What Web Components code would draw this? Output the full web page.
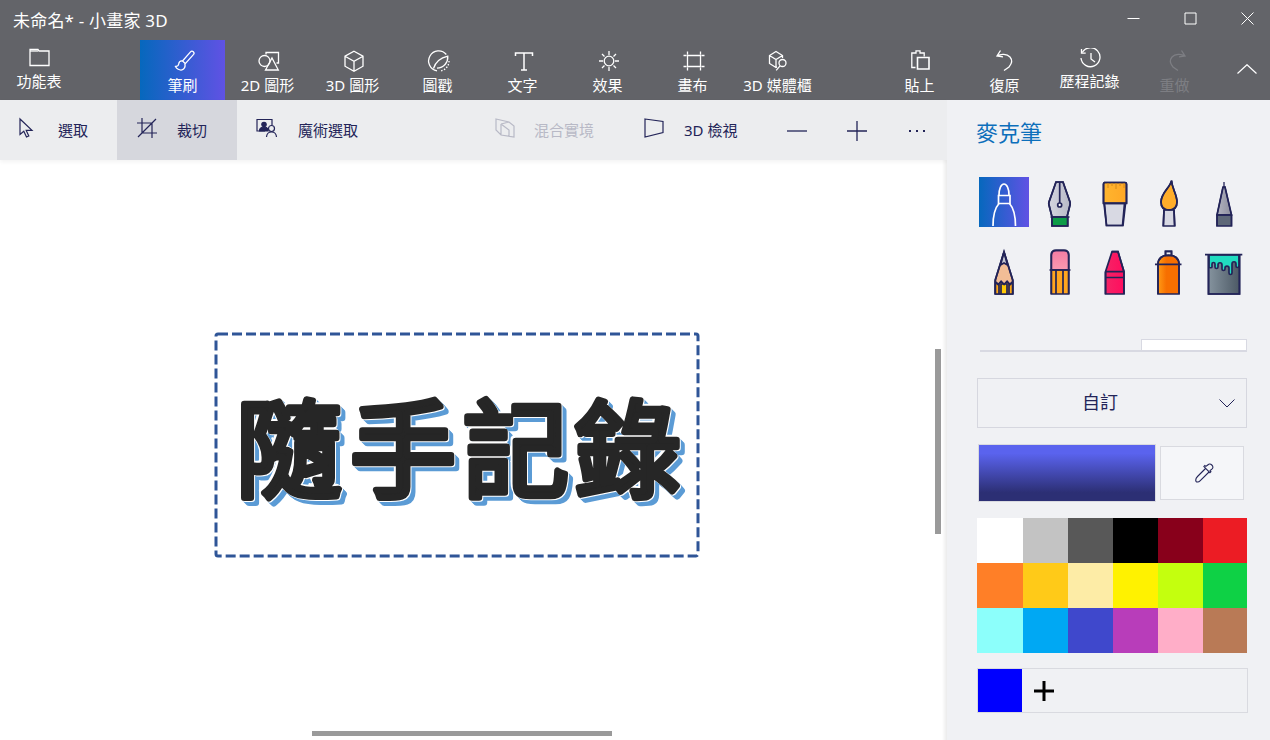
<!DOCTYPE html>
<html lang="zh-Hant"><head><meta charset="utf-8"><title>小畫家 3D</title>
<style>
html,body{margin:0;height:100%;overflow:hidden;background:#fff}
body{font-family:"Noto Sans","Noto Sans CJK TC",sans-serif;font-size:15px}
</style></head><body>
<paint-app>
  <paint-titlebar slot="title">未命名* - 小畫家 3D</paint-titlebar>
  <paint-ribbon slot="ribbon">
    <ribbon-button slot="menu" label="功能表" raised><svg viewBox="0 0 24 24"><path d="M3 1.500h8l1 1.500h10v14.500H3z"/><path d="M3 3h8"/></svg></ribbon-button>
    <ribbon-button active label="筆刷"><svg viewBox="0 0 24 24"><path d="M22.300 3.800c-.9-.9-2-.7-2.800.1L11.500 13l2.800 2.600 8.300-9.200c.6-.7.500-1.800-.3-2.600z"/><path d="M11.500 13c-2.300-.3-3.500 1-3.800 3-.2 1.500-1.400 2.400-3.200 2.500 1 2.300 4 4 6.500 3.400 2.600-.6 3.600-3.700 2.800-6.300"/></svg></ribbon-button>
    <ribbon-button label="2D 圖形"><svg viewBox="0 0 24 24"><circle cx="8.500" cy="13" r="5.500"/><path d="M10 6.500V4.500h12.500V15h-2"/><path d="M16 10l6.300 12H9.500z"/></svg></ribbon-button>
    <ribbon-button label="3D 圖形"><svg viewBox="0 0 24 24"><path d="M13 3.200l9 5v10l-9 5-9-5v-10zM4 8.200l9 5 9-5M13 13.200v10"/></svg></ribbon-button>
    <ribbon-button label="圖戳"><svg viewBox="0 0 24 24"><path d="M20.300 6.500A10 10 0 1 0 11 22.800"/><path d="M23 13a10 10 0 0 1-8 9.800" stroke-dasharray="1.500 1.500"/><path d="M7.500 20.500C9.500 14 14 10 21.800 8.200c.3 6.400-4 11.600-10.800 12"/></svg></ribbon-button>
    <ribbon-button label="文字"><svg viewBox="0 0 24 24"><path d="M4.500 8V5h17v3M13 5v17M10 22h6" stroke-width="1.500"/></svg></ribbon-button>
    <ribbon-button label="效果"><svg viewBox="0 0 24 24"><circle cx="13" cy="13" r="4.800"/><path d="M13 3v4M13 19v4M3 13h4M19 13h4M6 6l2.500 2.500M17.500 17.500L20 20M6 20l2.500-2.500M17.500 8.500L20 6"/></svg></ribbon-button>
    <ribbon-button label="畫布"><svg viewBox="0 0 24 24"><path d="M6.500 7.500h13v11h-13zM6.500 3.500v3M19.500 3.500v3M6.500 19.500v3M19.500 19.500v3M2.500 7.500h3M20.500 7.500h3M2.500 18.500h3M20.500 18.500h3"/></svg></ribbon-button>
    <ribbon-button label="3D 媒體櫃"><svg viewBox="0 0 24 24"><path d="M16.500 10V7.500l-6.500-4-6.500 4v8l6.500 4 1-.6M3.500 7.500l6.500 4 6.500-4M10 11.500v8"/><circle cx="16.500" cy="15" r="3.500"/><path d="M14 17.800l-3.800 4.500"/></svg></ribbon-button>
    <ribbon-button slot="end" label="貼上"><svg viewBox="0 0 24 24"><path d="M7.500 19.500H3.800V5h4.200V2.800h4V5h4.200v3.500"/><path d="M9.500 9.500h11.500v11.500H9.500z" stroke-width="1.600"/></svg></ribbon-button>
    <ribbon-button slot="end" label="復原"><svg viewBox="0 0 24 24"><path d="M7.500 2.500L4 8l6 .8M4 8c4-2.500 10-2 13 1 3 3.500 1.500 7-1 10l-5 3.500"/></svg></ribbon-button>
    <ribbon-button slot="end" label="歷程記錄" raised><svg viewBox="0 0 24 24"><path d="M4.200 4.500A9.500 9.500 0 1 1 3 10"/><path d="M3.500 1v4.200h4.200M13 5v6l4 3"/></svg></ribbon-button>
    <ribbon-button slot="end" label="重做" disabled><svg viewBox="0 0 24 24"><path d="M18.500 2.500L22 8l-6 .8M22 8c-4-2.500-10-2-13 1-3 3.500-1.500 7 1 10l5 3.500"/></svg></ribbon-button>
  </paint-ribbon>
  <paint-toolbar slot="toolbar">
    <tool-action style="width:117px;padding-left:19px" gap="23" label="選取"><svg viewBox="0 0 16 20"><path d="M1 1v15.500l3.800-3.300 2.700 5.800 2.300-1-2.600-5.600H13z"/></svg></tool-action>
    <tool-action selected style="width:120px;padding-left:20px" gap="20" label="裁切"><svg viewBox="0 0 20 20" style="width:20px"><path d="M0 5h15v15M5 0v15h15M1 19L19 1"/></svg></tool-action>
    <tool-action style="width:233px;padding-left:19px" gap="20" label="魔術選取"><svg viewBox="0 0 22 20" style="width:22px"><path d="M9 13H1V1.500h15V7"/><circle cx="8" cy="6.500" r="2.200" fill="#232458"/><path d="M3.500 13c0-3 2-4 4.500-4s3.500 1 4 2v2z" fill="#232458"/><circle cx="15.500" cy="10.500" r="3"/><path d="M10.500 19c.2-3 2-5 5-5s4.800 2 5 5"/></svg></tool-action>
    <tool-action disabled style="width:170px;padding-left:25px" gap="19" label="混合實境"><svg viewBox="0 0 20 20" style="width:20px"><path d="M1 1l13 3 5 4v11l-13-2-5-5zM1 1v11M6 6l8-2M6 6v11M6 6l8 6v6"/></svg></tool-action>
    <tool-action style="width:126px;padding-left:4px" gap="20" label="3D 檢視"><svg viewBox="0 0 20 20" style="width:20px"><path d="M1 1l18 2.500v11L1 19z"/></svg></tool-action>
    <tool-glyph type="minus"></tool-glyph>
    <tool-glyph type="plus"></tool-glyph>
    <tool-glyph type="more"></tool-glyph>
  </paint-toolbar>
  <paint-canvas slot="canvas"><canvas-selection text="隨手記錄"></canvas-selection></paint-canvas>
  <brush-panel slot="panel" heading="麥克筆">
    <brush-grid>
      <brush-tool selected><svg viewBox="0 0 50 50"><path d="M20 18c0-6 2-11 5-11s5 5 5 11"/><path d="M19.500 18.500h11.500v8H19.500z"/><path d="M20 26.500c-4.500 5-6 13-6 22.500M30.500 26.500c4.500 5 6 13 6 22.500"/></svg></brush-tool>
      <brush-tool><svg viewBox="0 0 50 50"><defs><linearGradient id="g1" x1="0" x2="1"><stop offset="0" stop-color="#d5d6e0"/><stop offset="1" stop-color="#b7b8c6"/></linearGradient></defs><path d="M22 5h7l7 20c.3 1 .3 2 0 3L33 40H18l-3-12c-.3-1-.3-2 0-3z" fill="url(#g1)"/><path d="M18 40h15.700v9H18z" fill="#0d9c47"/><path d="M22 5h7l7 20c.3 1 .3 2 0 3L33 40H18l-3-12c-.3-1-.3-2 0-3zM16.500 40h19M18 40v9h15.700v-9M25.700 5v21"/><circle cx="25.700" cy="28" r="2" fill="#fff"/></svg></brush-tool>
      <brush-tool><svg viewBox="0 0 50 50"><defs><linearGradient id="g2" x1="0" x2="1"><stop offset="0" stop-color="#ffb52e"/><stop offset="1" stop-color="#ffa726"/></linearGradient></defs><path d="M15 5.500h21c1 0 1.500.5 1.500 1.500v19h-23V7c0-1 .5-1.500 1.500-1.500z" fill="url(#g2)"/><path d="M15 26.500h21.500L34 48.500H17.500z" fill="#d8d9e3"/><path d="M15 5.500h21c1 0 1.500.5 1.500 1.500v19.500h-23V7c0-1 .5-1.500 1.500-1.500zM15.500 26.500l2 22h16l2-22"/><path d="M19 6v5M23 6v3M27 6v6M31 6v3M35 6v5" stroke="#d48a1c" stroke-width="1"/></svg></brush-tool>
      <brush-tool><svg viewBox="0 0 50 50"><path d="M28.500 3.500c-1 7-10.500 12-10.500 21.500 0 5 3 8 8 8s8-3 8-8c0-8-5-13-5.500-21.500z" fill="#ffad2a"/><path d="M21 33h10l.7 16H20.300z" fill="#d8d9e3"/><path d="M28.500 3.500c-1 7-10.500 12-10.500 21.500 0 5 3 8 8 8s8-3 8-8c0-8-5-13-5.500-21.500zM21 33l-.7 16M31 33l.7 16"/></svg></brush-tool>
      <brush-tool><svg viewBox="0 0 50 50"><defs><linearGradient id="g5" x1="0" x2="1"><stop offset="0" stop-color="#b3b4c1"/><stop offset="1" stop-color="#8d8e9d"/></linearGradient></defs><path d="M25 10h2l6.500 28H19z" fill="url(#g5)"/><path d="M19 38h14.500v11H19z" fill="#5e6878"/><path d="M26 5v5M25 10h2l6.500 28v11M19 49V38l6-28M19 38h14.500" stroke-width="1.300"/></svg></brush-tool>
      <brush-tool><svg viewBox="0 0 50 50"><path d="M25 7l8.700 28v14H16.300V35z" fill="#f2bd96"/><path d="M25 7l3.500 13-3.500-2-3.500 2z" fill="#c6c7d2"/><path d="M16.300 37l3 2.500 2.800-3 3 3 3-3 2.800 3 2.800-2.500V49H16.300z" fill="#ffa916"/><path d="M22 39h6v10h-6z" fill="#ffc906"/><path d="M25 7l8.700 28v14M16.300 49V35L25 7M16.300 37l3 2.500 2.800-3 3 3 3-3 2.800 3 2.800-2.500M20 39v10M30 39v10"/></svg></brush-tool>
      <brush-tool><svg viewBox="0 0 50 50"><defs><linearGradient id="g7" x1="0" x2="0" y1="0" y2="1"><stop offset="0" stop-color="#f47ba2"/><stop offset="1" stop-color="#f89ab0"/></linearGradient></defs><path d="M17.300 25V10c0-3 2-4.700 4.700-4.700h8c2.700 0 4.700 1.700 4.700 4.700v15z" fill="url(#g7)"/><path d="M17.300 25h17.400v24H17.300z" fill="#ffa51f"/><path d="M17.300 49V25V10c0-3 2-4.700 4.700-4.700h8c2.700 0 4.700 1.700 4.700 4.700v39M15.500 25h21M22 25v24M29 25v24"/></svg></brush-tool>
      <brush-tool><svg viewBox="0 0 50 50"><defs><linearGradient id="g8" x1="0" x2="1"><stop offset="0" stop-color="#f52466"/><stop offset="1" stop-color="#ff0d5e"/></linearGradient></defs><path d="M23 6.700h6l6 20V49H16.500V26.700z" fill="url(#g8)"/><path d="M23 6.700h6l6 20V49M16.500 49V26.700zM16.500 26.700h18.500M16.500 32.500h18.500"/></svg></brush-tool>
      <brush-tool><svg viewBox="0 0 50 50"><defs><linearGradient id="g9" x1="0" x2="1"><stop offset="0" stop-color="#ff9a15"/><stop offset=".4" stop-color="#f76f00"/></linearGradient></defs><path d="M15 19c0-6 5-9 10.500-9s10.500 3 10.500 9v30H15z" fill="url(#g9)"/><path d="M22.500 6.300h6v4.400h-6z" fill="#eee"/><path d="M15 49V19c0-6 5-9 10.500-9S36 13 36 19v30M12 19.300h26.500M22.500 10V6.300h6V10"/></svg></brush-tool>
      <brush-tool><svg viewBox="0 0 50 50"><defs><linearGradient id="g10" x1="0" x2="1"><stop offset="0" stop-color="#85939e"/><stop offset="1" stop-color="#4c5965"/></linearGradient></defs><path d="M10.500 10h31v39h-31z" fill="url(#g10)"/><path d="M11 10h30v11c0 2-3 2-3 0v-2c0-3-4-3-4 0v9c0 2-3 2-3 0v-5c0-2.500-4-2.500-4 0v1c0 2-3 2-3 0v-4c0-3-4-3-4 0v2c0 2-3 2-3 0v-3c0-2-3-2-3 0v3c0 1-3 1-3 0z" fill="#21dcc0"/><path d="M7 9.700h37.300M10.500 9.700V49h31V9.700"/></svg></brush-tool>
    </brush-grid>
    <thickness-slider></thickness-slider>
    <color-dropdown>自訂</color-dropdown>
    <color-current></color-current>
    <color-palette></color-palette>
    <custom-colors></custom-colors>
  </brush-panel>
</paint-app>
<script>
const FONT='"Noto Sans","Noto Sans CJK TC",sans-serif';
function define(name,css,html,extra){
  customElements.define(name,class extends HTMLElement{
    connectedCallback(){
      if(this.shadowRoot)return;
      const r=this.attachShadow({mode:'open'});
      r.innerHTML='<style>'+css+'</style>'+(typeof html==='function'?html(this):html);
      if(extra)extra(this,r);
    }
  });
}
define('paint-app',`:host{display:grid;width:1270px;height:740px;grid-template-columns:947px 323px;grid-template-rows:40px 60px 60px 1fr;overflow:hidden;font-family:${FONT}}
  .title{grid-column:1/3;grid-row:1}.ribbon{grid-column:1/3;grid-row:2}.toolbar{grid-column:1;grid-row:3;position:relative;z-index:1}.canvas{grid-column:1;grid-row:4;min-height:0}.panel{grid-column:2;grid-row:3/5;position:relative;z-index:2}`,
 `<div class="title"><slot name="title"></slot></div><div class="ribbon"><slot name="ribbon"></slot></div><div class="toolbar"><slot name="toolbar"></slot></div><div class="canvas"><slot name="canvas"></slot></div><div class="panel"><slot name="panel"></slot></div>`);
define('paint-titlebar',`:host{display:flex;height:40px;background:#636469;color:#fff;align-items:center;justify-content:space-between;font-size:17px}
  .t{padding:0 0 2px 13px;letter-spacing:.2px}.w{display:flex}.w svg{width:15px;height:15px;fill:none;stroke:#fff;stroke-width:1;display:block}
  .b{width:57px;height:32px;display:flex;align-items:center;justify-content:center;margin-top:-4px}`,
 `<div class="t"><slot></slot></div><div class="w"><div class="b"><svg viewBox="0 0 15 15"><path d="M1.500 7.500h12"/></svg></div><div class="b"><svg viewBox="0 0 15 15"><path d="M2 2h11v11H2z"/></svg></div><div class="b" style="margin-right:-6px"><svg viewBox="0 0 15 15"><path d="M1.500 1.500l12 12M13.500 1.500l-12 12"/></svg></div></div>`);
define('paint-ribbon',`:host{display:flex;height:60px;background:#626368;color:#fff}
  .m{width:140px;display:flex}.c{display:flex;flex:1}.e{display:flex;margin-right:8px}.u{width:45px;display:flex;align-items:flex-start;justify-content:center;padding-top:24px;box-sizing:border-box}
  .u svg{width:20px;height:10px;fill:none;stroke:#fff;stroke-width:1.200;margin-left:-1px}`,
 `<div class="m"><slot name="menu"></slot></div><div class="c"><slot></slot></div><div class="e"><slot name="end"></slot></div><div class="u"><svg viewBox="0 0 20 10"><path d="M.5 9.500L10 .7l9.500 8.800"/></svg></div>`);
define('ribbon-button',`:host{display:flex;flex-direction:column;align-items:center;width:85px;height:60px;box-sizing:border-box;padding-top:8px;color:#fff;font-size:15px;line-height:20px;white-space:nowrap}
  :host([slot=menu]){width:78px}
  :host([active]){background:linear-gradient(90deg,#0668bd,#6052e4)}
  :host([disabled]){color:#7d7e83}
  :host([raised]) .l{margin-top:-1px}
  .i{width:24px;height:24px;color:inherit}
  ::slotted(svg){width:24px;height:24px;display:block;fill:none;stroke:currentColor;stroke-width:1.300}
  .l{margin-top:3px}`,
 h=>`<div class="i"><slot></slot></div><div class="l">${h.getAttribute('label')}</div>`);
define('paint-toolbar',`:host{display:flex;height:60px;background:#ecedef;color:#232458;box-shadow:0 2px 4px rgba(0,0,0,.05)}`,`<slot></slot>`);
define('tool-action',`:host{display:flex;align-items:center;box-sizing:border-box;height:60px;color:#232458;font-size:15px;white-space:nowrap}
  :host([selected]){background:#d6d7dd}:host([disabled]){color:#b8b9c6}
  ::slotted(svg){width:16px;height:20px;display:block;fill:none;stroke:currentColor;stroke-width:1.200;margin-top:-4px;overflow:visible}`,
 h=>`<slot></slot><span style="margin-left:${h.getAttribute('gap')}px;padding-bottom:1px">${h.getAttribute('label')}</span>`);
define('tool-glyph',`:host{display:flex;width:60px;height:60px;align-items:center;justify-content:center;padding:1px 0 0 1px;box-sizing:border-box}
  svg{width:20px;height:20px;fill:none;stroke:#232458;stroke-width:1.300;display:block}`,
 h=>{const t=h.getAttribute('type');const d={minus:'<path d="M0 10h20"/>',plus:'<path d="M0 10h20M10 0v20"/>',more:'<path d="M2 10h2M9 10h2M16 10h2" stroke-width="2"/>'}[t];return `<svg viewBox="0 0 20 20">${d}</svg>`});
define('paint-canvas',`:host{display:block;position:relative;height:580px;background:#fff;overflow:hidden}
  .sv{position:absolute;left:935px;top:189px;width:6px;height:185px;background:#9a9a9a}
  .sh{position:absolute;left:312px;top:571px;width:300px;height:5px;background:#9a9a9a}
  .edge{position:absolute;right:0;top:0;bottom:0;width:5px;background:linear-gradient(90deg,rgba(0,0,0,0),rgba(0,0,0,.08))}`,
 `<slot></slot><div class="edge"></div><div class="sv"></div><div class="sh"></div>`);
define('canvas-selection',`:host{position:absolute;left:214px;top:172px;width:486px;height:226px;display:block}
  svg{display:block;width:486px;height:226px;overflow:visible}
  rect{fill:none;stroke:#2f5597;stroke-width:3;stroke-dasharray:10 4}
  .t{font-family:"Noto Sans CJK TC",sans-serif;font-weight:400;font-size:106px;fill:#262626;stroke:#262626;stroke-width:6.500px;stroke-linejoin:round;stroke-linecap:round;filter:drop-shadow(1.500px 1.500px 0 #fff) drop-shadow(-1.500px -1.500px 0 #fff) drop-shadow(4px 4px 0 #5b9bd5)}`,
 h=>`<svg viewBox="0 0 486 226"><rect x="2" y="2" width="482" height="222" rx="2"/><text class="t" x="22 136 249 361" y="157">${h.getAttribute('text')}</text></svg>`);
define('brush-panel',`:host{display:block;height:640px;box-sizing:border-box;background:#f0f1f4;padding-left:30px;padding-right:23px;color:#232458}
  h2{margin:0 0 0 -1px;height:77px;box-sizing:border-box;padding-top:17px;font-size:22px;font-weight:400;line-height:30px;color:#0c6fbb}
  .stack{display:flex;flex-direction:column}`,
 h=>`<h2>${h.getAttribute('heading')}</h2><div class="stack"><slot></slot></div>`);
define('brush-grid',`:host{display:grid;grid-template-columns:repeat(5,50px);column-gap:4.75px;row-gap:18px;margin-left:2px}`,`<slot></slot>`);
define('brush-tool',`:host{display:block;width:50px;height:50px}
  :host([selected]){background:linear-gradient(90deg,#0668bd,#6052e4)}
  ::slotted(svg){width:50px;height:50px;display:block;fill:none;stroke:#232458;stroke-width:1.700}
  :host([selected]) ::slotted(svg){stroke:#fff}`,`<slot></slot>`);
define('thickness-slider',`:host{display:flex;align-items:flex-end;justify-content:flex-end;height:11px;margin:44px 0 0 3px;border-bottom:2px solid #d8d9e2}
  .b{width:106px;height:11px;box-sizing:border-box;background:#fff;border:1px solid #d8d9e2;border-bottom:0}`,`<div class="b"></div>`);
define('color-dropdown',`:host{display:flex;position:relative;align-items:center;justify-content:center;height:50px;width:270px;box-sizing:border-box;margin-top:26px;border:1px solid #d6d7df;font-size:18px;color:#232458;padding:0 24px 4px 0}
  svg{position:absolute;right:11px;top:20px;width:16px;height:9px;fill:none;stroke:#232458;stroke-width:1}`,
 `<slot></slot><svg viewBox="0 0 16 9"><path d="M.5.500L8 8l7.500-7.500"/></svg>`);
define('color-current',`:host{display:flex;align-items:center;margin-top:16px;width:270px;height:58px}
  .s{width:178px;height:58px;margin-left:1px;box-sizing:border-box;border:1px solid #d9dae0;background:linear-gradient(#5a63ee 0,#5a63ee 15%,#2c2f74 85%,#2c2f74)}
  .e{width:84px;height:54px;margin-left:4px;box-sizing:border-box;border:1px solid #d9dae0;background:#f5f6f9;display:flex;align-items:center;justify-content:center}
  svg{width:20px;height:20px;fill:none;stroke:#232458;stroke-width:1.100;display:block;margin-left:6px}`,
 `<div class="s"></div><div class="e"><svg viewBox="0 0 20 20"><path d="M13 1.800c1-1.200 2.500-1 3.800.2 1.300 1.300 1.500 2.800.3 3.900l-2 1.700.8 1-1 1-6-6 1-1 1 .8zM11 5L2.500 13.500c-1 1-2.200 3-1.500 4.800.7.900 2.500 1 4-.500L14 9"/></svg></div>`);
define('color-palette',`:host{display:grid;grid-template-columns:46px repeat(4,45px) 44px;grid-auto-rows:45px;margin-top:16px;width:270px;height:135px;box-sizing:border-box;box-shadow:inset 0 0 0 1px #d9dae0}
  i{display:block;height:45px}`,
 ()=>['#fff','#c3c3c3','#585858','#000','#88001b','#ec1c24','#ff7f27','#ffca18','#fdeca6','#fff200','#c4ff0e','#0ed145','#8cfffb','#00a8f3','#3f48cc','#b83dba','#ffaec8','#b97a56'].map(c=>`<i style="background:${c}"></i>`).join(''));
define('custom-colors',`:host{display:flex;align-items:center;margin-top:15px;width:271px;height:45px;box-sizing:border-box;border:1px solid #d9dae0}
  .c{width:44px;height:43px;background:#00f}svg{width:20px;height:20px;margin-left:12px;stroke:#000;stroke-width:3;fill:none;display:block}`,
 `<div class="c"></div><svg viewBox="0 0 20 20"><path d="M0 10h20M10 0v20"/></svg>`);
</script>
</body></html>
